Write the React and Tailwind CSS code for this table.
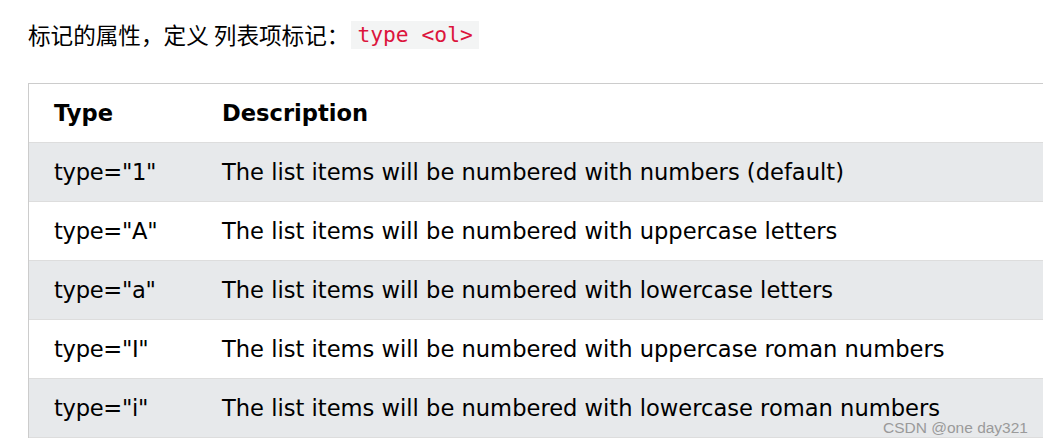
const rows = [
  ['type="1"', 'The list items will be numbered with numbers (default)'],
  ['type="A"', 'The list items will be numbered with uppercase letters'],
  ['type="a"', 'The list items will be numbered with lowercase letters'],
  ['type="I"', 'The list items will be numbered with uppercase roman numbers'],
  ['type="i"', 'The list items will be numbered with lowercase roman numbers'],
];

export default function App() {
  return (
    <div className="relative w-[1043px] h-[444px] overflow-hidden bg-white text-black font-['DejaVu_Sans','Noto_Sans_CJK_SC',sans-serif]">
      <p className="pl-[28px] pt-[21px] h-[83px] flex items-start text-[22.6px] leading-[28px]">
        <span className="font-['Noto_Sans_CJK_SC',sans-serif]">标记的属性，定义 列表项标记：</span>
        <code className="ml-[2px] px-[6px] bg-[#f3f4f4] text-[#dc143c] font-['DejaVu_Sans_Mono',monospace] text-[21.3px] leading-[28px]">
          type &lt;ol&gt;
        </code>
      </p>
      <div className="ml-[28px] w-[1100px] border-l border-t border-[#cccccc]">
        <div className="flex h-[59px] items-center pt-[2px] border-b border-[#dddddd] text-[22.6px] font-bold">
          <div className="w-[193px] pl-[25px]">Type</div>
          <div>Description</div>
        </div>
        {rows.map(([t, d], i) => (
          <div
            key={t}
            className={
              'flex h-[59px] items-center pt-[2px] border-b border-[#dddddd] text-[22.6px] ' +
              (i % 2 === 0 ? 'bg-[#e7e9eb]' : 'bg-white')
            }
          >
            <div className="w-[193px] pl-[25px] tracking-[-0.3px]">{t}</div>
            <div>{d}</div>
          </div>
        ))}
      </div>
      <div className="absolute left-[883px] top-[416px] text-[15.5px] text-[#9a9a9a] font-['Liberation_Sans',sans-serif]">
        CSDN @one day321
      </div>
    </div>
  );
}
